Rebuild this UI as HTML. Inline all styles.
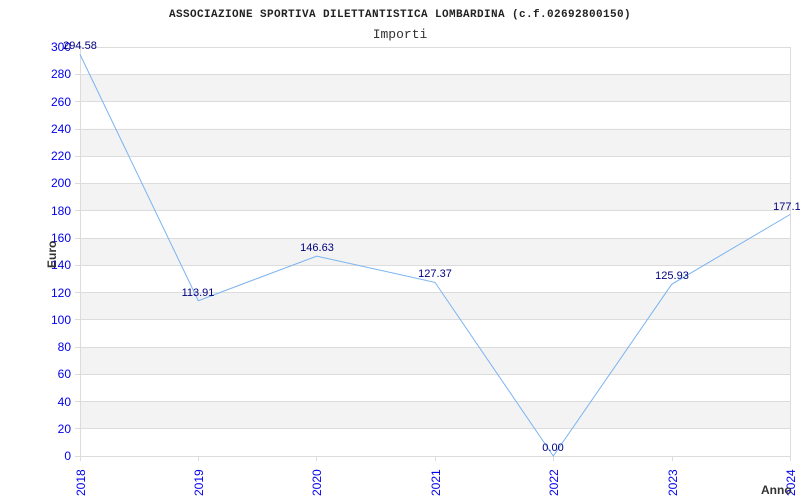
<!DOCTYPE html>
<html><head><meta charset="utf-8"><style>
html,body{margin:0;padding:0;background:#fff;width:800px;height:500px;overflow:hidden}
svg{display:block}
</style></head><body>
<svg width="800" height="500" xmlns="http://www.w3.org/2000/svg" font-family="Liberation Sans, sans-serif">
<rect width="800" height="500" fill="#fff"/>
<g fill="#f3f3f3">
<rect x="80" y="74.3" width="710" height="27.3"/>
<rect x="80" y="128.8" width="710" height="27.3"/>
<rect x="80" y="183.3" width="710" height="27.3"/>
<rect x="80" y="237.9" width="710" height="27.3"/>
<rect x="80" y="292.4" width="710" height="27.3"/>
<rect x="80" y="346.9" width="710" height="27.3"/>
<rect x="80" y="401.5" width="710" height="27.3"/>
</g>
<g stroke="#dcdcdc" stroke-width="1">
<line x1="75" y1="47.5" x2="790" y2="47.5"/>
<line x1="75" y1="74.5" x2="790" y2="74.5"/>
<line x1="75" y1="101.5" x2="790" y2="101.5"/>
<line x1="75" y1="129.5" x2="790" y2="129.5"/>
<line x1="75" y1="156.5" x2="790" y2="156.5"/>
<line x1="75" y1="183.5" x2="790" y2="183.5"/>
<line x1="75" y1="210.5" x2="790" y2="210.5"/>
<line x1="75" y1="238.5" x2="790" y2="238.5"/>
<line x1="75" y1="265.5" x2="790" y2="265.5"/>
<line x1="75" y1="292.5" x2="790" y2="292.5"/>
<line x1="75" y1="319.5" x2="790" y2="319.5"/>
<line x1="75" y1="347.5" x2="790" y2="347.5"/>
<line x1="75" y1="374.5" x2="790" y2="374.5"/>
<line x1="75" y1="401.5" x2="790" y2="401.5"/>
<line x1="75" y1="428.5" x2="790" y2="428.5"/>
<line x1="75" y1="456.5" x2="790" y2="456.5"/>
<line x1="80.5" y1="47" x2="80.5" y2="461"/>
<line x1="790.5" y1="47" x2="790.5" y2="461"/>
<line x1="198.5" y1="456" x2="198.5" y2="461"/>
<line x1="316.5" y1="456" x2="316.5" y2="461"/>
<line x1="435.5" y1="456" x2="435.5" y2="461"/>
<line x1="553.5" y1="456" x2="553.5" y2="461"/>
<line x1="672.5" y1="456" x2="672.5" y2="461"/>
</g>
<g fill="#0000ee" font-size="12" text-anchor="end">
<text x="71" y="51">300</text><text x="71" y="78">280</text><text x="71" y="106">260</text>
<text x="71" y="133">240</text><text x="71" y="160">220</text><text x="71" y="187">200</text>
<text x="71" y="215">180</text><text x="71" y="242">160</text><text x="71" y="269">140</text>
<text x="71" y="297">120</text><text x="71" y="324">100</text><text x="71" y="351">80</text>
<text x="71" y="378">60</text><text x="71" y="406">40</text><text x="71" y="433">20</text>
<text x="71" y="460">0</text>
</g>
<g fill="#0000ee" font-size="12">
<text transform="translate(85,496) rotate(-90)">2018</text>
<text transform="translate(203,496) rotate(-90)">2019</text>
<text transform="translate(321,496) rotate(-90)">2020</text>
<text transform="translate(440,496) rotate(-90)">2021</text>
<text transform="translate(558,496) rotate(-90)">2022</text>
<text transform="translate(677,496) rotate(-90)">2023</text>
<text transform="translate(795,496) rotate(-90)">2024</text>
</g>
<polyline fill="none" stroke="#7ab4f0" stroke-width="1" points="80,54.4 198.3,300.7 316.7,256.1 435,282.4 553.3,456 671.7,284.3 790,214.5"/>
<g fill="#000080" font-size="11" text-anchor="middle">
<text x="80" y="49">294.58</text>
<text x="198" y="296">113.91</text>
<text x="317" y="251">146.63</text>
<text x="435" y="277">127.37</text>
<text x="553" y="451">0.00</text>
<text x="672" y="279">125.93</text>
<text x="790" y="210">177.13</text>
</g>
<text transform="translate(56,268) rotate(-90)" font-size="12" font-weight="bold" fill="#333">Euro</text>
<text x="761" y="494" font-size="12" font-weight="bold" fill="#333">Anno</text>
<text x="400" y="17" text-anchor="middle" font-family="Liberation Mono, monospace" font-size="11" font-weight="bold" letter-spacing="0.4" fill="#222">ASSOCIAZIONE SPORTIVA DILETTANTISTICA LOMBARDINA (c.f.02692800150)</text>
<text x="400" y="38" text-anchor="middle" font-family="Liberation Mono, monospace" font-size="13" fill="#333">Importi</text>
</svg>
</body></html>
